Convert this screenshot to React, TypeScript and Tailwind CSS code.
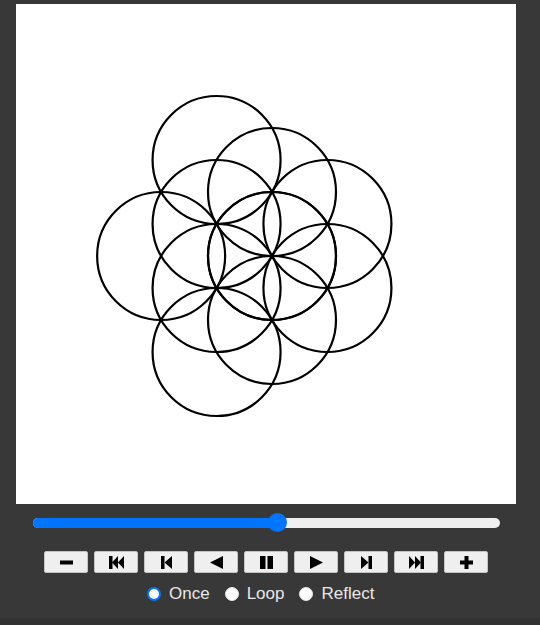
import React from "react";

const R = 64;
const DX = 55.43;
const CX = 256;
const CY = 252;

// circles drawn so far (frame in the middle of the animation)
const circles: [number, number][] = [
  [CX, CY],
  [CX, CY],
  [CX, CY - R],
  [CX + DX, CY - R / 2],
  [CX + DX, CY + R / 2],
  [CX, CY + R],
  [CX - DX, CY + R / 2],
  [CX - DX, CY - R / 2],
  [CX - DX, CY - 1.5 * R],
  [CX - 2 * DX, CY],
  [CX - DX, CY + 1.5 * R],
];

const Icon = ({ children, w = 15 }: { children: React.ReactNode; w?: number }) => (
  <svg width={w} height={13} viewBox={`0 0 ${w} 13`} fill="#000">
    {children}
  </svg>
);

const buttons = [
  <Icon key="minus" w={13}>
    <rect x="0" y="4.5" width="13" height="4" />
  </Icon>,
  <Icon key="first" w={15}>
    <rect x="0" y="0" width="3.5" height="13" />
    <polygon points="9,0 3,6.5 9,13" />
    <polygon points="15,0 9,6.5 15,13" />
  </Icon>,
  <Icon key="prev" w={11}>
    <rect x="0" y="0" width="3.5" height="13" />
    <polygon points="11,0 3.5,6.5 11,13" />
  </Icon>,
  <Icon key="reverse" w={13}>
    <polygon points="13,0 0,6.5 13,13" />
  </Icon>,
  <Icon key="pause" w={13}>
    <rect x="0" y="0" width="5.5" height="13" />
    <rect x="7.5" y="0" width="5.5" height="13" />
  </Icon>,
  <Icon key="play" w={13}>
    <polygon points="0,0 13,6.5 0,13" />
  </Icon>,
  <Icon key="next" w={11}>
    <polygon points="0,0 7.5,6.5 0,13" />
    <rect x="7.5" y="0" width="3.5" height="13" />
  </Icon>,
  <Icon key="last" w={15}>
    <polygon points="0,0 6,6.5 0,13" />
    <polygon points="6,0 12,6.5 6,13" />
    <rect x="11.5" y="0" width="3.5" height="13" />
  </Icon>,
  <Icon key="plus" w={13}>
    <rect x="0" y="4.5" width="13" height="4" />
    <rect x="4.5" y="0" width="4" height="13" />
  </Icon>,
];

const Radio = ({ label, checked, first }: { label: string; checked?: boolean; first?: boolean }) => (
  <label className={`flex items-center h-[20px] ${first ? "" : "ml-[15px]"}`}>
    <span
      className={
        checked
          ? "w-[14px] h-[14px] rounded-full bg-white border-2 border-[#0075ff]"
          : "w-[14px] h-[14px] rounded-full bg-white border border-[#e6e6e6]"
      }
    />
    <span className="ml-[8px] text-[17px] leading-[20px] text-[#e8e8e8]">{label}</span>
  </label>
);

export default function App() {
  return (
    <div className="min-h-screen bg-[#323232] font-['Liberation_Sans',Arial,sans-serif]">
      <div className="w-[540px] h-[618px] bg-[#383838] pt-[4px]">
        <div className="ml-[16px] w-[500px] h-[500px] bg-white">
          <svg width="500" height="500" viewBox="0 0 500 500">
            {circles.map(([x, y], i) => (
              <circle key={i} cx={x} cy={y} r={R} fill="none" stroke="#000" strokeWidth="2.2" />
            ))}
          </svg>
        </div>

        <div className="relative ml-[33px] mt-[9px] w-[467px] h-[19px] flex items-center">
          <div className="w-full h-[10px] rounded-full bg-[#efefef] overflow-hidden">
            <div className="w-[245px] h-full bg-[#0075ff]" />
          </div>
          <div className="absolute left-[235px] top-0 w-[19px] h-[19px] rounded-full bg-[#0075ff]" />
        </div>

        <div className="flex gap-[6px] ml-[44px] mt-[19px]">
          {buttons.map((icon, i) => (
            <button
              key={i}
              className="w-[44px] h-[22px] flex items-center justify-center bg-[#efefef] border border-[#c4c4c4] rounded-[2px]"
            >
              {icon}
            </button>
          ))}
        </div>

        <div className="flex ml-[147px] mt-[11px]">
          <Radio label="Once" checked first />
          <Radio label="Loop" />
          <Radio label="Reflect" />
        </div>
      </div>
    </div>
  );
}
